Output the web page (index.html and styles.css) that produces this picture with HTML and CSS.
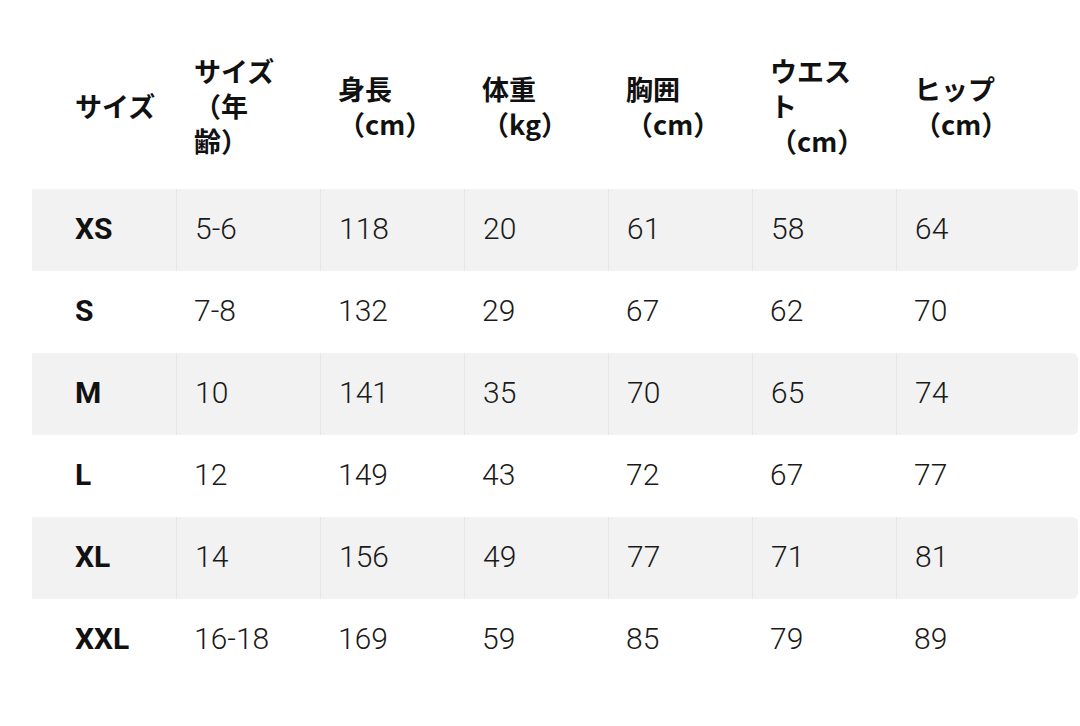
FILE: index.html
```html
<!DOCTYPE html>
<html lang="ja">
<head>
<meta charset="utf-8">
<title>サイズ表</title>
<link rel="stylesheet" href="styles.css">
</head>
<body>
<table class="size-table">
  <colgroup>
    <col class="c-first"><col class="c"><col class="c"><col class="c"><col class="c"><col class="c"><col class="c-last">
  </colgroup>
  <thead>
    <tr>
      <th class="first">サイズ</th>
      <th>サイズ（年齢）</th>
      <th>身長（cm）</th>
      <th>体重（kg）</th>
      <th>胸囲（cm）</th>
      <th>ウエスト（cm）</th>
      <th>ヒップ（cm）</th>
    </tr>
  </thead>
  <tbody>
    <tr class="shade"><th class="first">XS</th><td>5-6</td><td>118</td><td>20</td><td>61</td><td>58</td><td>64</td></tr>
    <tr><th class="first">S</th><td>7-8</td><td>132</td><td>29</td><td>67</td><td>62</td><td>70</td></tr>
    <tr class="shade"><th class="first">M</th><td>10</td><td>141</td><td>35</td><td>70</td><td>65</td><td>74</td></tr>
    <tr><th class="first">L</th><td>12</td><td>149</td><td>43</td><td>72</td><td>67</td><td>77</td></tr>
    <tr class="shade"><th class="first">XL</th><td>14</td><td>156</td><td>49</td><td>77</td><td>71</td><td>81</td></tr>
    <tr><th class="first">XXL</th><td>16-18</td><td>169</td><td>59</td><td>85</td><td>79</td><td>89</td></tr>
  </tbody>
</table>
</body>
</html>
```
FILE: styles.css
```css
html, body {
  margin: 0;
  padding: 0;
  background: #ffffff;
}
body {
  font-family: "Noto Sans CJK JP", "Noto Sans", sans-serif;
  color: #111111;
}
.size-table {
  margin: 30px 0 0 32px;
  border-collapse: separate;
  border-spacing: 0;
  table-layout: fixed;
  width: 1046px;
}
.c-first, .c { width: 144px; }
.c-last { width: 182px; }
.size-table thead th {
  height: 159px;
  padding: 0 36px 8px 18px;
  text-align: left;
  vertical-align: middle;
  font-size: 27px;
  line-height: 35px;
  font-weight: 700;
  box-sizing: border-box;
}
.size-table thead th.first {
  padding-left: 43px;
  padding-right: 0;
}
.size-table thead th:last-child {
  padding-right: 60px;
}
.size-table tbody th,
.size-table tbody td {
  height: 82px;
  padding: 0 0 3px 18px;
  text-align: left;
  vertical-align: middle;
  font-family: "Roboto", "Noto Sans CJK JP", sans-serif;
  font-size: 30px;
  line-height: 40px;
  box-sizing: border-box;
  font-variant-numeric: tabular-nums;
}
.size-table tbody td {
  font-weight: 300;
  color: #1a1a1a;
}
.size-table tbody th.first {
  padding-left: 43px;
  font-weight: 700;
  color: #111111;
}
.size-table tr.shade th,
.size-table tr.shade td {
  background: #f2f2f2;
}
.size-table tr.shade td {
  border-left: 1px solid #e6e6e6;
}
.size-table tr.shade td:last-child {
  border-radius: 0 6px 6px 0;
}
```
